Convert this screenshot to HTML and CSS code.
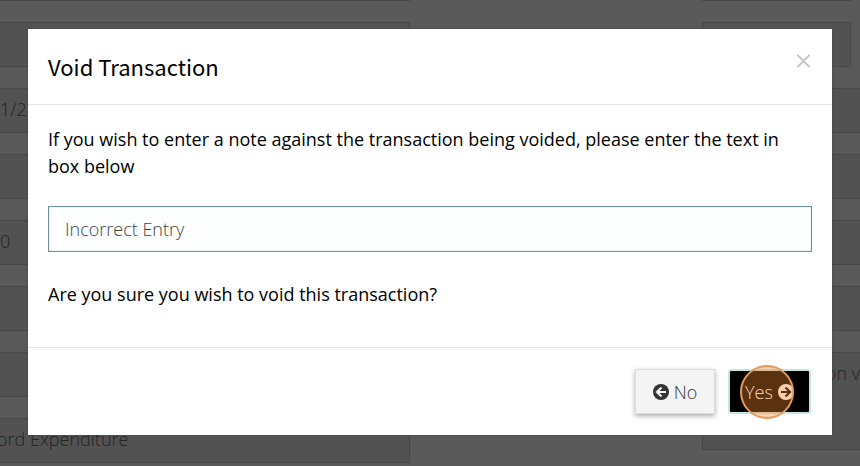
FILE: index.html
```html
<!DOCTYPE html>
<html lang="en">
<head>
<meta charset="utf-8">
<title>Void Transaction</title>
<meta name="viewport" content="width=device-width, initial-scale=1">
<link rel="stylesheet" href="styles.css">
</head>
<body>
<div class="page">
  <div class="column column-left">
    <div class="field"></div>
    <div class="field"></div>
    <div class="field">1/2</div>
    <div class="field"></div>
    <div class="field">0</div>
    <div class="field"></div>
    <div class="field"></div>
    <div class="field"><span class="clipped-start">ord Expenditure</span></div>
  </div>
  <div class="column column-right">
    <div class="field field-short"></div>
    <div class="field field-short"></div>
    <div class="field"></div>
    <div class="field"></div>
    <div class="field"></div>
    <div class="field"></div>
    <div class="field field-tall">on v</div>
  </div>
</div>
<div class="overlay">
  <section class="modal" role="dialog" aria-modal="true" aria-labelledby="modal-title">
    <header class="modal-header">
      <h1 id="modal-title">Void Transaction</h1>
      <button class="close" type="button" aria-label="Close">
        <svg viewBox="0 0 16 16" width="16" height="16"><path d="M1.500 2l12 12M13.500 2l-12 12" fill="none" stroke="#c4c4c4" stroke-width="1.800"/></svg>
      </button>
    </header>
    <div class="modal-body">
      <label class="message" for="note">If you wish to enter a note against the transaction being voided, please enter the text in box below</label>
      <input class="note" id="note" type="text" value="Incorrect Entry">
      <p class="message">Are you sure you wish to void this transaction?</p>
    </div>
    <footer class="modal-footer">
      <button class="button button-no" type="button">
        <svg viewBox="0 0 16 16" width="16" height="16"><circle cx="8" cy="8" r="8" fill="#333"/><path d="M8.500 3.500L4 8l4.500 4.500M4.500 8H13" fill="none" stroke="#f4f4f4" stroke-width="2.200"/></svg>
        No
      </button>
      <button class="button button-yes" type="button">
        Yes
        <svg viewBox="0 0 16 16" width="16" height="16"><circle cx="8" cy="8" r="8" fill="#fff"/><path d="M7.500 3.500L12 8l-4.500 4.500M11.500 8H3" fill="none" stroke="#000" stroke-width="2.200"/></svg>
        <span class="click-marker"></span>
      </button>
    </footer>
  </section>
</div>
</body>
</html>
```

FILE: styles.css
```css
* {
  box-sizing: border-box;
}

body {
  margin: 0;
  min-height: 100vh;
  overflow: hidden;
  background: #595959;
  color: #242424;
  font-family: "Open Sans", "Noto Sans", sans-serif;
  font-size: 18px;
  font-weight: 300;
}

.page {
  display: flex;
  justify-content: space-between;
  height: 100vh;
  overflow: hidden;
}

.column {
  display: flex;
  flex-direction: column;
  gap: 21px;
  margin-top: -44px;
}

.column-left {
  width: 410px;
}

.column-right {
  width: 158px;
}

.field {
  flex: none;
  height: 45px;
  border: 1px solid #474747;
  border-left: 0;
  background: #525252;
  line-height: 40px;
  white-space: nowrap;
}

.column-left .field {
  overflow: hidden;
}

.column-right .field {
  border-left: 1px solid #474747;
  border-right: 0;
  text-align: right;
}

.column-right .field-short {
  width: 149px;
  border-right: 1px solid #474747;
}

.column-right .field-tall {
  height: 98px;
}

.clipped-start {
  margin-left: -3px;
}

.overlay {
  position: absolute;
  inset: 0;
  padding: 29px 28px;
}

.modal {
  background: #fff;
  box-shadow: 0 0 2px #444;
  color: #000;
}

.modal-header {
  display: flex;
  align-items: flex-start;
  justify-content: space-between;
  padding: 20px;
  border-bottom: 1px solid #e5e5e5;
}

h1 {
  margin: 0;
  font-family: "Noto Sans CJK SC", "Noto Sans", sans-serif;
  font-size: 22px;
  font-weight: 400;
  line-height: 35px;
}

.close {
  display: flex;
  margin: 4px 0 0;
  padding: 0;
  border: 0;
  background: none;
}

.modal-body {
  padding: 21px 20px 39px;
}

.message {
  display: block;
  margin: 0;
  font-size: 18px;
  font-weight: 400;
  line-height: 27px;
}

.note {
  display: block;
  width: 100%;
  height: 46px;
  margin: 26px 0 29px;
  padding: 0 16px;
  border: 1px solid #6f9198;
  outline: 0;
  background: #fdffff;
  box-shadow: inset 0 0 1px #6f9198;
  color: #444;
  font: inherit;
}

.modal-footer {
  display: flex;
  justify-content: flex-end;
  gap: 13px;
  padding: 21px;
  border-top: 1px solid #e5e5e5;
}

.button {
  position: relative;
  display: flex;
  align-items: center;
  justify-content: center;
  gap: 5px;
  width: 80px;
  height: 45px;
  padding: 0;
  border: 1px solid #ddd;
  background: #f4f4f4;
  color: #333;
  font: inherit;
}

.button-no {
  box-shadow: 0 2px 5px #aaa;
}

.button-yes {
  width: 83px;
  border: 2px solid #c5e5e5;
  border-radius: 3px;
  background: #000;
  color: #fff;
}

.click-marker {
  position: absolute;
  top: 50%;
  left: 50%;
  width: 54px;
  height: 54px;
  margin: -27px 0 0 -30px;
  border: 2px solid #e39a5c;
  border-radius: 50%;
  background: rgba(237, 131, 43, 0.38);
}
```
